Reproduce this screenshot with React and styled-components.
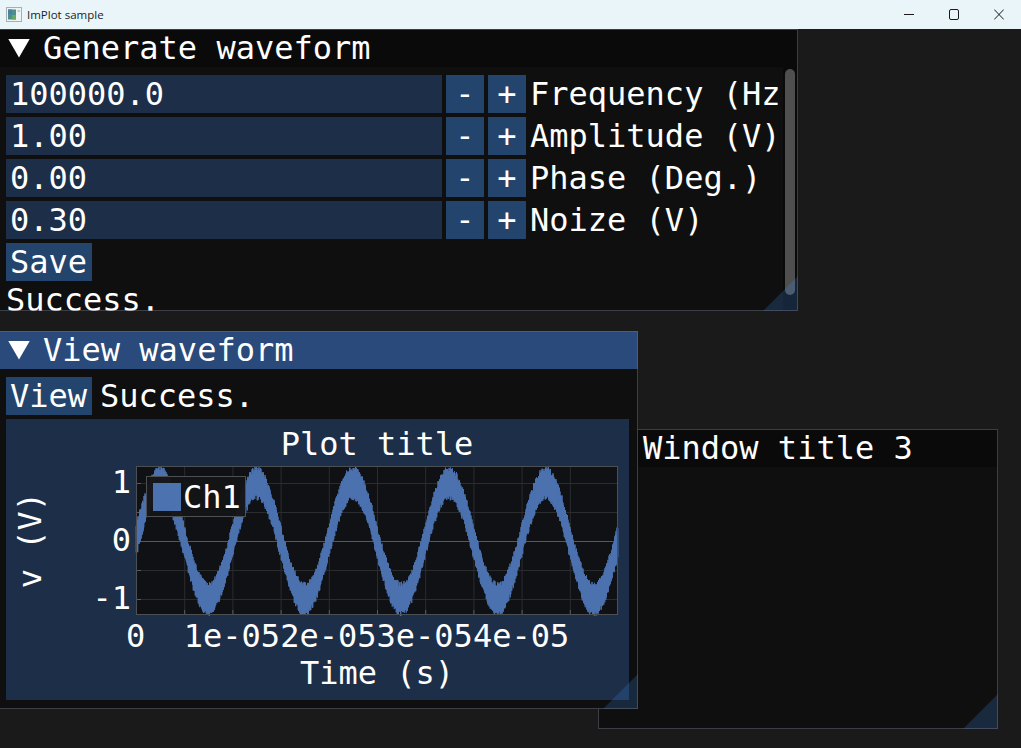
import React, { useMemo } from "react";
import styled, { createGlobalStyle } from "styled-components";

const MONO = `"DejaVu Sans Mono", "Liberation Mono", monospace`;

const params = [
  { value: "100000.0", label: "Frequency (Hz)" },
  { value: "1.00", label: "Amplitude (V)" },
  { value: "0.00", label: "Phase (Deg.)" },
  { value: "0.30", label: "Noize (V)" },
];

const PLOT_W = 482;
const PLOT_H = 149;
const PX_PER_TICK = 96.4;
const ZERO_Y = 75;
const PX_PER_VOLT = 58;

const makeWave = () => {
  let seed = 1234567;
  const rand = () => {
    seed = (seed * 16807) % 2147483647;
    return seed / 2147483647;
  };
  const pts = [];
  let sign = 1;
  for (let x = 0; x <= PLOT_W; x += 0.25) {
    // noise swings from side to side so the band stays solid, with a jagged edge
    const noise = sign * (0.19 + rand() * 0.11);
    sign = -sign;
    const v = Math.sin((2 * Math.PI * x) / PX_PER_TICK) + noise;
    pts.push(`${x.toFixed(2)},${(ZERO_Y - v * PX_PER_VOLT).toFixed(1)}`);
  }
  return pts.join(" ");
};

const Plot = () => {
  const wave = useMemo(makeWave, []);
  const vTicks = Array.from({ length: 10 }, (_, i) => i * (PX_PER_TICK / 2));
  const hTicks = [-2, -1, 0, 1, 2].map((i) => ZERO_Y + i * 29);

  return (
    <PlotArea>
      <ChartSvg width={PLOT_W} height={PLOT_H} viewBox={`0 0 ${PLOT_W} ${PLOT_H}`}>
        <rect x="0" y="0" width={PLOT_W} height={PLOT_H} fill="#0f1114" />
        {vTicks.map((x) => (
          <g key={x}>
            <line x1={x + 0.5} x2={x + 0.5} y1="0" y2={PLOT_H} stroke="#2b2c2e" />
            <line x1={x + 0.5} x2={x + 0.5} y1={PLOT_H - 5} y2={PLOT_H} stroke="#5a5b5d" />
          </g>
        ))}
        {hTicks.map((y) => (
          <g key={y}>
            <line x1="0" x2={PLOT_W} y1={y + 0.5} y2={y + 0.5} stroke={y === ZERO_Y ? "#57585a" : "#2b2c2e"} />
            <line x1="0" x2="5" y1={y + 0.5} y2={y + 0.5} stroke="#5a5b5d" />
          </g>
        ))}
        <polyline points={wave} fill="none" stroke="#4c72b0" strokeWidth="1" />
        <rect x="0.5" y="0.5" width={PLOT_W - 1} height={PLOT_H - 1} fill="none" stroke="#4e4f53" />
        <TickText x="-5" y="27" textAnchor="end">1</TickText>
        <TickText x="-5" y="85" textAnchor="end">0</TickText>
        <TickText x="-5" y="143" textAnchor="end">-1</TickText>
        <TickText x="-0.5" y="181" textAnchor="middle">0</TickText>
        {["1e-05", "2e-05", "3e-05", "4e-05"].map((label, i) => (
          <TickText key={label} x={(i + 1) * PX_PER_TICK - 0.5} y="181" textAnchor="middle">
            {label}
          </TickText>
        ))}
      </ChartSvg>
      <Legend>
        <Swatch />
        <span>Ch1</span>
      </Legend>
    </PlotArea>
  );
};

const App = () => (
  <>
    <GlobalStyle />
    <TitleBar>
      <AppIcon width="16" height="16" viewBox="0 0 16 16">
        <rect x="0.5" y="0.5" width="15" height="14" fill="#eef3f4" stroke="#a6b0b3" />
        <rect x="2" y="2.5" width="8" height="10" fill="#4d8f8c" />
        <rect x="2" y="2.5" width="4" height="5" fill="#4a7fa6" />
        <rect x="6" y="8" width="4" height="4.5" fill="#6aa868" />
        <rect x="11.5" y="3" width="2.5" height="2" fill="#c3cacc" />
      </AppIcon>
      <AppName>ImPlot sample</AppName>
      <Controls>
        <svg width="10" height="11" viewBox="0 0 10 11">
          <path d="M0 5.5h10" stroke="#1a1a1a" fill="none" />
        </svg>
        <svg width="10" height="11" viewBox="0 0 10 11">
          <rect x="0.5" y="0.5" width="9" height="10" rx="1.5" stroke="#1a1a1a" fill="none" />
        </svg>
        <svg width="10" height="11" viewBox="0 0 10 11">
          <path d="M0.2 0.5l9.6 10M9.8 0.5l-9.6 10" stroke="#1a1a1a" fill="none" />
        </svg>
      </Controls>
    </TitleBar>

    <Desktop>
      <Window $x={-1} $y={0} $w={799} $h={282}>
        <WindowTitle>
          <Arrow />
          Generate waveform
        </WindowTitle>
        <ScrollBody>
          {params.map((p) => (
            <Row key={p.label}>
              <NumberField>{p.value}</NumberField>
              <StepButton>-</StepButton>
              <StepButton>+</StepButton>
              <ParamLabel>{p.label}</ParamLabel>
            </Row>
          ))}
          <Row>
            <ActionButton>Save</ActionButton>
          </Row>
          <StatusLine>Success.</StatusLine>
        </ScrollBody>
        <ScrollTrack>
          <ScrollGrab />
        </ScrollTrack>
        <ResizeGrip />
      </Window>

      <Window $x={598} $y={400} $w={400} $h={300}>
        <WindowTitle $plain>Window title 3</WindowTitle>
        <ResizeGrip />
      </Window>

      <Window $x={-1} $y={302} $w={639} $h={378}>
        <WindowTitle $active>
          <Arrow />
          View waveform
        </WindowTitle>
        <ViewBody>
          <Row $gap={8}>
            <ActionButton>View</ActionButton>
            <span>Success.</span>
          </Row>
          <PlotPane>
            <PlotTitle>Plot title</PlotTitle>
            <YLabel>v (V)</YLabel>
            <Plot />
            <XLabel>Time (s)</XLabel>
          </PlotPane>
        </ViewBody>
        <ResizeGrip />
      </Window>
    </Desktop>
  </>
);

export default App;

const GlobalStyle = createGlobalStyle`
  html, body {
    margin: 0;
    padding: 0;
    height: 100%;
    overflow: hidden;
    background: #1a1a1a;
  }
  * {
    box-sizing: border-box;
  }
`;

const TitleBar = styled.div`
  height: 29px;
  display: flex;
  align-items: center;
  padding-left: 6px;
  background: #e9f5f9;
  font-family: "Open Sans", "Noto Sans", sans-serif;
`;

const AppIcon = styled.svg`
  flex: none;
`;

const AppName = styled.span`
  margin-left: 5px;
  font-size: 11.5px;
  color: #1c1c1c;
`;

const Controls = styled.div`
  margin-left: auto;
  display: flex;
  gap: 35px;
  padding-right: 17px;

  svg {
    display: block;
  }
`;

const Desktop = styled.div`
  position: relative;
  height: 719px;
  overflow: hidden;
  font: 32px/38px ${MONO};
  color: #fff;
  white-space: pre;
`;

const Window = styled.section`
  position: absolute;
  left: ${(p) => p.$x}px;
  top: ${(p) => p.$y}px;
  width: ${(p) => p.$w}px;
  height: ${(p) => p.$h}px;
  background: rgba(15, 15, 15, 0.94);
  overflow: hidden;

  &::after {
    content: "";
    position: absolute;
    inset: 0;
    border: 1px solid rgba(110, 110, 128, 0.5);
    pointer-events: none;
  }
`;

const WindowTitle = styled.header`
  height: 38px;
  display: flex;
  align-items: center;
  gap: 13px;
  padding-left: ${(p) => (p.$plain ? 45 : 9)}px;
  background: ${(p) => (p.$active ? "#294a7a" : "#0a0a0a")};
`;

const Arrow = styled.i`
  display: block;
  width: 22px;
  height: 19px;
  background: #fff;
  clip-path: polygon(0 0, 100% 0, 50% 100%);
`;

const ScrollBody = styled.div`
  width: 784px;
  height: 244px;
  padding: 8px 0 0 7px;
  overflow: hidden;
  display: flex;
  flex-direction: column;
  gap: 4px;
`;

const ViewBody = styled.div`
  padding: 8px 8px 0 7px;
  display: flex;
  flex-direction: column;
  gap: 4px;
`;

const Row = styled.div`
  display: flex;
  align-items: center;
  gap: ${(p) => p.$gap || 4}px;
  height: 38px;
  flex: none;
`;

const NumberField = styled.div`
  flex: none;
  width: 436px;
  height: 38px;
  padding-left: 4px;
  background: rgba(41, 74, 122, 0.54);
`;

const StepButton = styled.div`
  flex: none;
  width: 38px;
  height: 38px;
  text-align: center;
  background: rgba(66, 150, 250, 0.4);
`;

const ParamLabel = styled.span`
  flex: none;
`;

const ActionButton = styled.div`
  flex: none;
  width: 86px;
  height: 38px;
  padding-left: 4px;
  background: rgba(66, 150, 250, 0.4);
`;

const StatusLine = styled.div`
  line-height: 30px;
  flex: none;
`;

const ScrollTrack = styled.div`
  position: absolute;
  top: 38px;
  right: 0;
  bottom: 0;
  width: 15px;
  padding: 2px 3px 0 2px;
  background: rgba(5, 5, 5, 0.53);
`;

const ScrollGrab = styled.div`
  height: 226px;
  border-radius: 5px;
  background: #4f4f4f;
`;

const ResizeGrip = styled.div`
  position: absolute;
  right: 0;
  bottom: 0;
  width: 35px;
  height: 35px;
  background: rgba(66, 150, 250, 0.2);
  clip-path: polygon(100% 0, 100% 100%, 0 100%);
`;

const PlotPane = styled.div`
  width: 623px;
  height: 281px;
  display: grid;
  grid-template-columns: 130px 482px;
  grid-template-rows: 47px 149px 1fr;
  background: rgba(41, 74, 122, 0.54);
`;

const PlotTitle = styled.div`
  grid-column: 2;
  grid-row: 1;
  padding-top: 10px;
  line-height: 30px;
  text-align: center;
`;

const YLabel = styled.div`
  grid-column: 1;
  grid-row: 2;
  align-self: center;
  justify-self: start;
  margin-left: 9px;
  line-height: 30px;
  writing-mode: vertical-rl;
  transform: rotate(180deg);
`;

const PlotArea = styled.div`
  grid-column: 2;
  grid-row: 2;
  position: relative;
  width: 482px;
  height: 149px;
`;

const ChartSvg = styled.svg`
  display: block;
  overflow: visible;
`;

const TickText = styled.text`
  font: 32px ${MONO};
  fill: #fff;
`;

const Legend = styled.div`
  position: absolute;
  left: 10px;
  top: 10px;
  width: 100px;
  height: 41px;
  display: flex;
  align-items: center;
  gap: 2px;
  padding-left: 6px;
  background: rgba(20, 21, 23, 0.96);
  border: 1px solid #4e4f53;
`;

const Swatch = styled.i`
  display: block;
  width: 28px;
  height: 28px;
  background: #4c72b0;
`;

const XLabel = styled.div`
  grid-column: 2;
  grid-row: 3;
  padding-top: 43px;
  line-height: 30px;
  text-align: center;
`;
